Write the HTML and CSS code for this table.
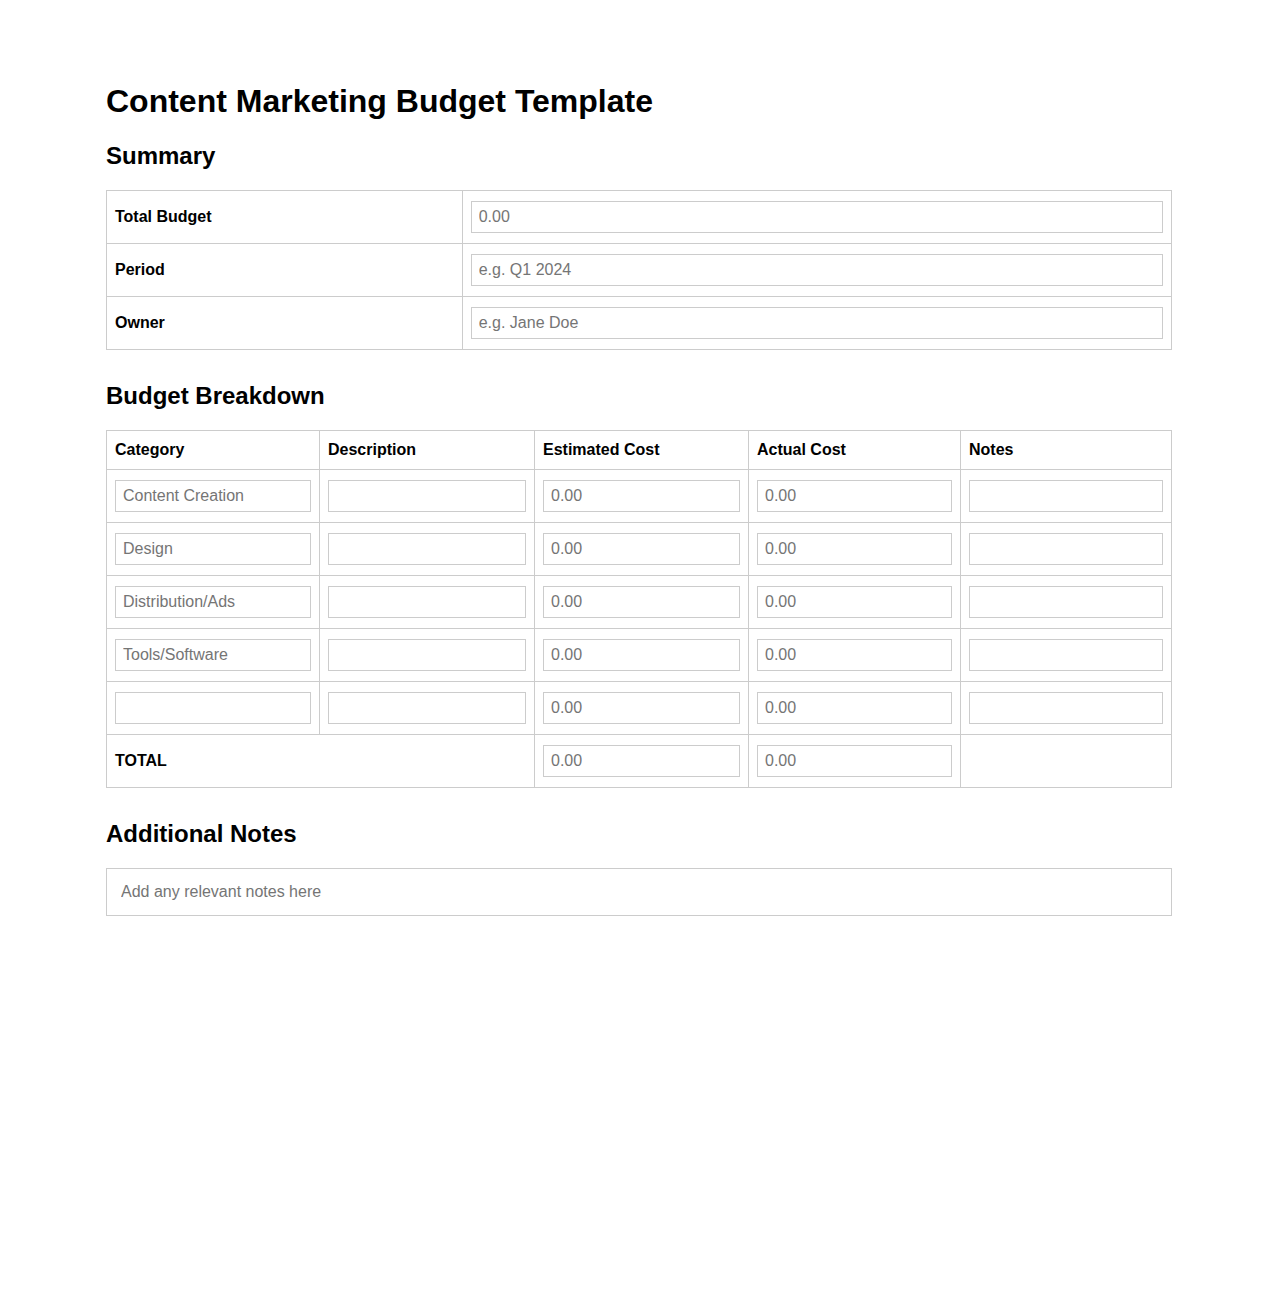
FILE: index.html
```html
<!DOCTYPE html>
<html lang="en">
<head>
<meta charset="utf-8">
<title>Content Marketing Budget Template</title>
<link rel="stylesheet" href="styles.css">
</head>
<body>
<div class="page">
  <h1 class="title">Content Marketing Budget Template</h1>

  <h2 class="section-title">Summary</h2>
  <table class="grid summary">
    <colgroup><col class="label-col"><col></colgroup>
    <tr>
      <th class="cell label">Total Budget</th>
      <td class="cell"><input class="field" type="text" placeholder="0.00"></td>
    </tr>
    <tr>
      <th class="cell label">Period</th>
      <td class="cell"><input class="field" type="text" placeholder="e.g. Q1 2024"></td>
    </tr>
    <tr>
      <th class="cell label">Owner</th>
      <td class="cell"><input class="field" type="text" placeholder="e.g. Jane Doe"></td>
    </tr>
  </table>

  <h2 class="section-title">Budget Breakdown</h2>
  <table class="grid breakdown">
    <colgroup>
      <col class="col-category">
      <col class="col-description">
      <col class="col-estimated">
      <col class="col-actual">
      <col class="col-notes">
    </colgroup>
    <thead>
      <tr>
        <th class="cell head">Category</th>
        <th class="cell head">Description</th>
        <th class="cell head">Estimated Cost</th>
        <th class="cell head">Actual Cost</th>
        <th class="cell head">Notes</th>
      </tr>
    </thead>
    <tbody>
      <tr>
        <td class="cell"><input class="field" type="text" placeholder="Content Creation"></td>
        <td class="cell"><input class="field" type="text"></td>
        <td class="cell"><input class="field" type="text" placeholder="0.00"></td>
        <td class="cell"><input class="field" type="text" placeholder="0.00"></td>
        <td class="cell"><input class="field" type="text"></td>
      </tr>
      <tr>
        <td class="cell"><input class="field" type="text" placeholder="Design"></td>
        <td class="cell"><input class="field" type="text"></td>
        <td class="cell"><input class="field" type="text" placeholder="0.00"></td>
        <td class="cell"><input class="field" type="text" placeholder="0.00"></td>
        <td class="cell"><input class="field" type="text"></td>
      </tr>
      <tr>
        <td class="cell"><input class="field" type="text" placeholder="Distribution/Ads"></td>
        <td class="cell"><input class="field" type="text"></td>
        <td class="cell"><input class="field" type="text" placeholder="0.00"></td>
        <td class="cell"><input class="field" type="text" placeholder="0.00"></td>
        <td class="cell"><input class="field" type="text"></td>
      </tr>
      <tr>
        <td class="cell"><input class="field" type="text" placeholder="Tools/Software"></td>
        <td class="cell"><input class="field" type="text"></td>
        <td class="cell"><input class="field" type="text" placeholder="0.00"></td>
        <td class="cell"><input class="field" type="text" placeholder="0.00"></td>
        <td class="cell"><input class="field" type="text"></td>
      </tr>
      <tr>
        <td class="cell"><input class="field" type="text"></td>
        <td class="cell"><input class="field" type="text"></td>
        <td class="cell"><input class="field" type="text" placeholder="0.00"></td>
        <td class="cell"><input class="field" type="text" placeholder="0.00"></td>
        <td class="cell"><input class="field" type="text"></td>
      </tr>
      <tr>
        <th class="cell label" colspan="2">TOTAL</th>
        <td class="cell"><input class="field" type="text" placeholder="0.00"></td>
        <td class="cell"><input class="field" type="text" placeholder="0.00"></td>
        <td class="cell"></td>
      </tr>
    </tbody>
  </table>

  <h2 class="section-title">Additional Notes</h2>
  <input class="notes" type="text" placeholder="Add any relevant notes here">
</div>
</body>
</html>
```

FILE: styles.css
```css
html, body {
  margin: 0;
  padding: 0;
  background: #ffffff;
}

body {
  font-family: "Liberation Sans", Arial, sans-serif;
  color: #000;
}

.page {
  width: 1066px;
  margin: 0 auto;
  padding-top: 62px;
  padding-bottom: 40px;
}

.title {
  font-size: 32px;
  font-weight: bold;
  margin: 21.44px 0;
}

.section-title {
  font-size: 24px;
  font-weight: bold;
  margin: 19.92px 0;
}

.grid {
  width: 100%;
  border-collapse: collapse;
  table-layout: fixed;
  margin-bottom: 32px;
}

.summary .label-col {
  width: 33.4%;
}

.col-category { width: 213px; }
.col-description { width: 215px; }
.col-estimated { width: 214px; }
.col-actual { width: 212px; }
.col-notes { width: 211px; }

.cell {
  border: 1px solid #cccccc;
  padding: 10px 8px;
  text-align: left;
  vertical-align: middle;
  font-size: 16px;
}

.head,
.label {
  font-weight: bold;
}

.field {
  display: block;
  box-sizing: border-box;
  width: 100%;
  height: 32px;
  margin: 0;
  padding: 6px 7px;
  border: 1px solid #cccccc;
  border-radius: 0;
  font-family: "Liberation Sans", Arial, sans-serif;
  font-size: 16px;
  color: #000;
  background: #fff;
  outline: none;
}

.field::placeholder,
.notes::placeholder {
  color: #757575;
  opacity: 1;
}

.notes {
  display: block;
  box-sizing: border-box;
  width: 100%;
  height: 48px;
  margin: 0;
  padding: 14px 14px;
  border: 1px solid #cccccc;
  border-radius: 0;
  font-family: "Liberation Sans", Arial, sans-serif;
  font-size: 16px;
  color: #000;
  background: #fff;
  outline: none;
}
```
